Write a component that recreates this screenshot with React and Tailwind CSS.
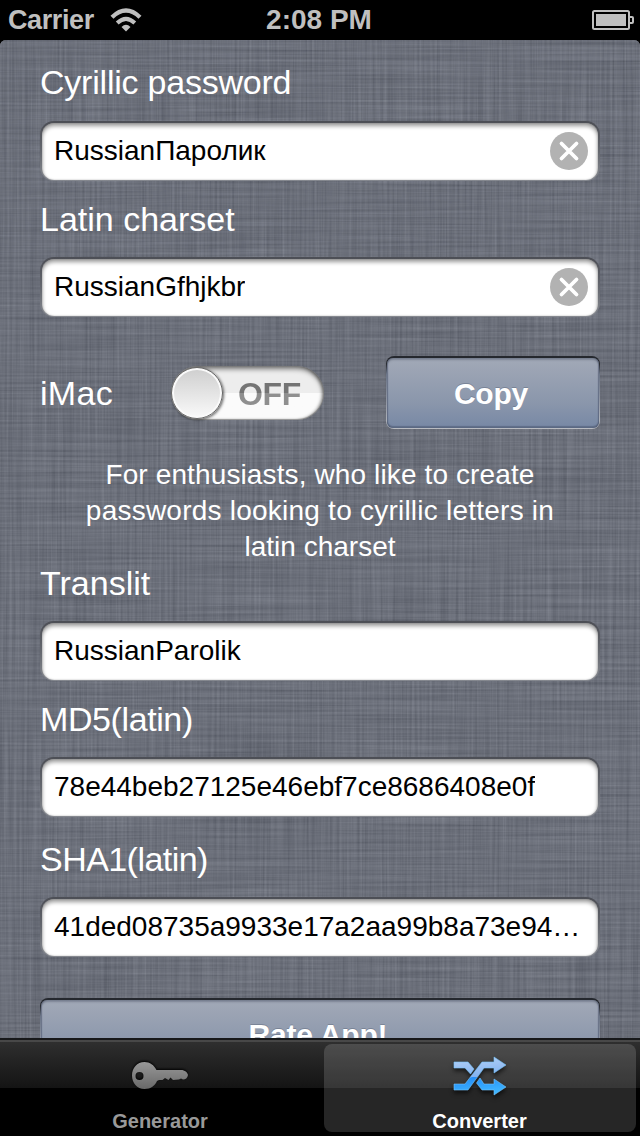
import React from "react";

function Linen() {
  return (
    <svg className="absolute inset-0 h-full w-full" width="640" height="998" aria-hidden="true">
      <defs>
        <filter id="warp" x="0" y="0" width="100%" height="100%" colorInterpolationFilters="sRGB">
          <feTurbulence type="fractalNoise" baseFrequency="0.4 0.006" numOctaves="4" seed="4" />
          <feColorMatrix values="0.24 0 0 0 0.302  0.24 0 0 0 0.318  0.24 0 0 0 0.36  0 0 0 0 1" />
        </filter>
        <filter id="weft" x="0" y="0" width="100%" height="100%" colorInterpolationFilters="sRGB">
          <feTurbulence type="fractalNoise" baseFrequency="0.006 0.4" numOctaves="4" seed="9" />
          <feColorMatrix values="0.24 0 0 0 0.302  0.24 0 0 0 0.318  0.24 0 0 0 0.36  0 0 0 0 1" />
        </filter>
      </defs>
      <rect width="640" height="998" filter="url(#warp)" />
      <rect width="640" height="998" filter="url(#weft)" opacity="0.5" />
    </svg>
  );
}

function Label({ children, className = "" }) {
  return <div className={`h-10 text-[34px] leading-10 whitespace-nowrap text-white ${className}`}>{children}</div>;
}

function Field({ value, clearable, className = "" }) {
  return (
    <div className={`h-[60px] rounded-[14px] bg-linear-to-b from-[#4c4e55] via-[#65686f] to-[#85888f] px-0.5 pt-0.5 pb-px ${className}`}>
      <div className="flex h-[57px] items-center justify-between rounded-[12px] bg-white pr-2.5 pb-[2px] pl-3 shadow-[inset_0_3px_4px_rgba(0,0,0,0.4),inset_0_0_2px_rgba(0,0,0,0.25)]">
        <span className="truncate text-[28px] leading-9 text-black">{value}</span>
        {clearable && (
          <svg className="mt-px size-[38px] shrink-0" viewBox="0 0 38 38">
            <circle cx="19" cy="19" r="19" fill="#b2b2b2" />
            <path d="M11.5 11.5 26.5 26.5 M26.5 11.5 11.5 26.5" stroke="#fff" strokeWidth="3.8" strokeLinecap="round" />
          </svg>
        )}
      </div>
    </div>
  );
}

function Button({ children, className = "" }) {
  return (
    <button className={`block h-[73px] rounded-[8px] bg-linear-to-b from-[#25282e] from-10% via-[#6b7588] via-25% to-[#b9bcc2] to-100% px-px pt-0.5 pb-px ${className}`}>
      <span className="flex h-[70px] items-center justify-center rounded-[6px] bg-linear-to-b from-[#a2a9b7] via-[#8a96ab] via-65% to-[#7788a5] pr-1 text-[30px] leading-9 font-bold tracking-[-0.2px] text-white shadow-[inset_0_2px_2px_rgba(70,78,95,0.4),inset_0_-2px_1px_rgba(75,85,110,0.55),inset_1px_0_1px_rgba(75,85,110,0.5),inset_-1px_0_1px_rgba(75,85,110,0.5)] text-shadow-[0_-1px_0_rgba(80,90,110,0.4)]">
        {children}
      </span>
    </button>
  );
}

function Toggle() {
  return (
    <div className="flex h-[54px] w-[153px] items-center rounded-full bg-linear-to-b from-[#ededed] from-50% to-[#fbfbfb] to-50% shadow-[inset_0_3px_5px_rgba(0,0,0,0.5),inset_-2px_0_3px_rgba(0,0,0,0.3),inset_0_-1px_1px_rgba(0,0,0,0.3)]">
      <div className="size-[52px] shrink-0 rounded-full border border-[#666] bg-linear-to-b from-[#cecece] to-[#fafafa] shadow-[inset_0_0_0_2px_#fafafa,1px_1px_3px_rgba(0,0,0,0.6)]" />
      <span className="ml-[15px] bg-linear-to-b from-[#747474] from-50% to-[#8f8f8f] to-50% bg-clip-text pt-0.5 text-[32px] leading-[54px] font-bold tracking-[-0.3px] text-transparent">OFF</span>
    </div>
  );
}

function KeyIcon() {
  return (
    <svg width="58" height="29" viewBox="0 0 58 29" className="drop-shadow-[0_-1px_1px_#000]">
      <defs>
        <linearGradient id="key" x2="0" y2="1">
          <stop stopColor="#989898" />
          <stop offset="1" stopColor="#696969" />
        </linearGradient>
      </defs>
      <path
        fill="url(#key)"
        fillRule="evenodd"
        d="M13.5 1C19 1 23 4 25.5 9H50C54 9 56.5 11.5 57 14C56.5 17 54.5 18.5 52 18.5L50 17.5L48 18.5L42 19L39.5 16.5L37.5 19L34 17L31.5 19H28L26 20C24 24.5 20 28 13.5 28C6 28 1 22 1 14.5S6 1 13.5 1ZM8.5 11A4 4 0 1 0 8.5 19A4 4 0 1 0 8.5 11Z"
      />
    </svg>
  );
}

function ShuffleIcon() {
  return (
    <svg width="54" height="40" viewBox="0 0 54 40" className="shrink-0 drop-shadow-[0_3px_2px_rgba(0,0,0,0.6)]">
      <defs>
        <linearGradient id="shuffle" gradientUnits="userSpaceOnUse" x1="0" y1="0" x2="4" y2="40">
          <stop stopColor="#b8d4f7" />
          <stop offset="0.57" stopColor="#83b2f0" />
          <stop offset="0.58" stopColor="#258ff8" />
          <stop offset="1" stopColor="#3fb6ff" />
        </linearGradient>
      </defs>
      <g fill="url(#shuffle)" stroke="#76c4fc" strokeWidth="0.6">
        <path d="M1 6H15L21 13L17.5 18L12 12H1Z" />
        <path d="M1 28H12L29 6H41V1L53 9L41 17V12H31L15 34H1Z" />
        <path d="M27 22L31 28H41V23L53 31L41 39V34H29L23.5 27Z" />
      </g>
    </svg>
  );
}

function StatusBar() {
  return (
    <header className="grid h-10 grid-cols-[1fr_auto_1fr] items-center bg-black pr-1.5 pl-2 font-bold text-[#bfbfbf]">
      <div className="flex items-center gap-4">
        <span className="text-[27px] leading-10 tracking-[-0.4px]">Carrier</span>
        <svg width="32" height="24" viewBox="0 0 32 24">
          <path d="M2 9.2Q16-4.2 30 9.2" fill="none" stroke="#bfbfbf" strokeWidth="4.3" />
          <path d="M7.2 15Q16 6.7 24.8 15" fill="none" stroke="#bfbfbf" strokeWidth="4" />
          <path d="M11.5 19Q16 14.5 20.5 19L16 23.5Z" fill="#bfbfbf" />
        </svg>
      </div>
      <span className="-ml-1 text-[28px] leading-10">2:08 PM</span>
      <svg className="justify-self-end" width="42" height="20" viewBox="0 0 42 20">
        <rect x="1" y="1" width="36" height="18" rx="1.5" fill="none" stroke="#bfbfbf" strokeWidth="2" />
        <rect x="4" y="4" width="30" height="12" fill="#bfbfbf" />
        <path d="M38 7H40Q41 7 41 8V12Q41 13 40 13H38" fill="none" stroke="#bfbfbf" strokeWidth="2" />
      </svg>
    </header>
  );
}

export default function App() {
  return (
    <div className="flex h-[1136px] w-[640px] flex-col overflow-hidden bg-black font-['Liberation_Sans',Arial,sans-serif]">
      <StatusBar />
      <main className="relative h-[998px] shrink-0 overflow-hidden rounded-t-[6px] bg-[#6c707b]">
        <Linen />
        <div className="relative px-10 pt-[22px]">
          <Label className="tracking-[-0.22px]">Cyrillic password</Label>
          <Field value="RussianПаролик" clearable className="mt-[19px]" />
          <Label className="mt-[18px]">Latin charset</Label>
          <Field value="RussianGfhjkbr" clearable className="mt-[18px]" />
          <div className="mt-[39px] flex h-[74px] items-center">
            <Label className="w-[131px] tracking-[0.3px]">iMac</Label>
            <Toggle />
            <Button className="mb-px ml-auto w-[214px]">
              <span className="pt-0.5">Copy</span>
            </Button>
          </div>
          <p className="mt-[27px] text-center text-[28px] leading-9 whitespace-nowrap text-white">
            <span className="tracking-[0.12px]">For enthusiasts, who like to create</span>
            <br />
            <span className="tracking-[0.23px]">passwords looking to cyrillic letters in</span>
            <br />
            latin charset
          </p>
          <Label className="-mt-[2px]">Translit</Label>
          <Field value="RussianParolik" className="mt-[18px]" />
          <Label className="mt-[18px] tracking-[-0.4px]">MD5(latin)</Label>
          <Field value="78e44beb27125e46ebf7ce8686408e0f" className="mt-[18px]" />
          <Label className="mt-[22px] tracking-[-0.55px]">SHA1(latin)</Label>
          <Field value="41ded08735a9933e17a2aa99b8a73e94…" className="mt-[18px]" />
          <Button className="mt-[41px] w-full">Rate App!</Button>
        </div>
      </main>
      <nav className="grid h-[98px] shrink-0 grid-cols-2 border-t-2 border-[#17181a] bg-linear-to-b from-[#303030] to-[#141414] bg-[length:100%_48px] bg-no-repeat text-[20px] font-bold shadow-[inset_0_2px_0_#484848]">
        <div className="flex flex-col items-center pt-[21px] text-[#999]">
          <KeyIcon />
          <span className="mt-[19px] leading-6">Generator</span>
        </div>
        <div className="mx-1 mt-1 flex h-[88px] flex-col items-center rounded-[8px] bg-white/15 pt-[12px] text-white">
          <ShuffleIcon />
          <span className="mt-[13px] pr-px leading-6">Converter</span>
        </div>
      </nav>
    </div>
  );
}
